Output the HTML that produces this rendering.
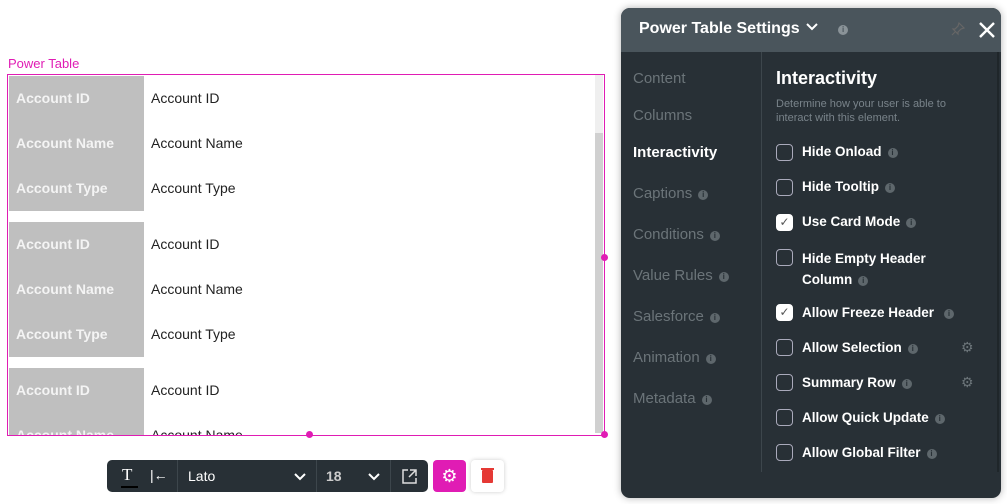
<!DOCTYPE html>
<html><head><style>
*{box-sizing:border-box;margin:0;padding:0}
body{width:1007px;height:504px;background:#fff;font-family:"Liberation Sans",sans-serif;position:relative;overflow:hidden}
.abs{position:absolute}
.lbl{left:8px;top:56px;color:#e01cb4;font-size:13px}
.box{left:7px;top:74px;width:598px;height:362px;border:1px solid #e01cb4;overflow:hidden}
.card{position:absolute;left:1px;width:586px}
.row{height:45px;display:flex;align-items:center;font-size:14px}
.row .h{width:135px;height:45px;background:#bfbfbf;color:#f4f4f4;padding-left:7px;display:flex;align-items:center;font-weight:bold;padding-bottom:2px}
.row .v{padding-left:7px;color:#222;padding-bottom:2px}
.sbt{left:595px;top:75px;width:8px;height:58px;background:#efefef}
.sbh{left:595px;top:133px;width:8px;height:300px;background:#d0d0d0}
.dot{width:7px;height:7px;border-radius:50%;background:#e01cb4}
.panel{left:621px;top:8px;width:380px;height:490px;background:#283036;border-radius:9px;overflow:hidden;box-shadow:0 0 8px rgba(0,0,0,.3)}
.ph{height:44px;background:#4a555c;color:#fff;font-weight:bold;font-size:16px;padding:12px 18px}
.nav{position:absolute;left:12px;font-size:15px;color:#6b7479}
.i{display:inline-block;width:10px;height:10px;border-radius:50%;background:#5e676c;color:#283036;font-size:8px;text-align:center;line-height:10px;font-weight:bold;vertical-align:1px;margin-left:6px}
.opt{position:absolute;left:155px;font-size:13.5px;color:#fff;font-weight:bold}
.cb{position:absolute;left:155px;width:17px;height:17px;border:1.5px solid #aab;border-radius:4px}
.cb.on{background:#fff;border-color:#fff}
.tb{left:107px;top:460px;width:321px;height:32px;background:#283036;border-radius:5px;color:#fff;font-size:14px}
</style></head><body>
<div class="abs lbl">Power Table</div>
<div class="abs box">
 <div class="card" style="top:1px">
  <div class="row"><div class="h">Account ID</div><div class="v">Account ID</div></div>
  <div class="row"><div class="h">Account Name</div><div class="v">Account Name</div></div>
  <div class="row"><div class="h">Account Type</div><div class="v">Account Type</div></div>
 </div>
 <div class="card" style="top:147px">
  <div class="row"><div class="h">Account ID</div><div class="v">Account ID</div></div>
  <div class="row"><div class="h">Account Name</div><div class="v">Account Name</div></div>
  <div class="row"><div class="h">Account Type</div><div class="v">Account Type</div></div>
 </div>
 <div class="card" style="top:293px">
  <div class="row"><div class="h">Account ID</div><div class="v">Account ID</div></div>
  <div class="row"><div class="h">Account Name</div><div class="v">Account Name</div></div>
 </div>
</div>
<div class="abs sbt"></div><div class="abs sbh"></div>
<div class="abs dot" style="left:601px;top:254px"></div>
<div class="abs dot" style="left:601px;top:431px"></div>
<div class="abs dot" style="left:306px;top:431px"></div>

<div class="abs panel">
 <div class="ph">Power Table Settings <svg width="12" height="8" style="margin-left:2px;vertical-align:2px"><path d="M1 1l5 5 5-5" stroke="#fff" stroke-width="2" fill="none"/></svg><span class="i" style="margin-left:20px;background:#8a9398;color:#4a555c">i</span>
  <svg style="position:absolute;right:5px;top:13px" width="18" height="18"><path d="M2 2l14 14M16 2L2 16" stroke="#fff" stroke-width="2.4"/></svg>
  <svg style="position:absolute;right:36px;top:14px" width="14" height="14"><path d="M8 1l5 5-3 1-3 3 0 2-5-5 2 0 3-3z M4 10l-3 3" stroke="#666" stroke-width="1.2" fill="none"/></svg></div>
 <div class="abs" style="left:140px;top:44px;width:1px;height:420px;background:#3d464c"></div>
 <div class="abs" style="left:376px;top:44px;width:2px;height:420px;background:#1f262a"></div>
 <div class="nav" style="top:62px">Content</div>
 <div class="nav" style="top:99px">Columns</div>
 <div class="nav" style="top:136px;color:#fff;font-weight:bold">Interactivity</div>
 <div class="nav" style="top:177px">Captions<span class="i">i</span></div>
 <div class="nav" style="top:218px">Conditions<span class="i">i</span></div>
 <div class="nav" style="top:259px">Value Rules<span class="i">i</span></div>
 <div class="nav" style="top:300px">Salesforce<span class="i">i</span></div>
 <div class="nav" style="top:341px">Animation<span class="i">i</span></div>
 <div class="nav" style="top:382px">Metadata<span class="i">i</span></div>
 <div class="abs" style="left:155px;top:60px;color:#fff;font-weight:bold;font-size:18px">Interactivity</div>
 <div class="abs" style="left:155px;top:89px;color:#79838a;font-size:11px;line-height:14px">Determine how your user is able to<br>interact with this element.</div>
 <div class="cb" style="top:136px"></div><div class="opt" style="left:181px;top:136px">Hide Onload<span class="i">i</span></div>
 <div class="cb" style="top:171px"></div><div class="opt" style="left:181px;top:171px">Hide Tooltip<span class="i">i</span></div>
 <div class="cb on" style="top:206px;color:#555;font-size:12px;text-align:center;line-height:15px">✓</div><div class="opt" style="left:181px;top:206px">Use Card Mode<span class="i">i</span></div>
 <div class="cb" style="top:241px"></div><div class="opt" style="left:181px;top:240px;line-height:21px">Hide Empty Header<br>Column<span class="i">i</span></div>
 <div class="cb on" style="top:296px;color:#555;font-size:12px;text-align:center;line-height:15px">✓</div><div class="opt" style="left:181px;top:297px">Allow Freeze Header<span class="i" style="margin-left:10px">i</span></div>
 <div class="cb" style="top:331px"></div><div class="opt" style="left:181px;top:332px">Allow Selection<span class="i">i</span></div>
 <div class="abs" style="left:340px;top:331px;color:#6b7479;font-size:14px">⚙</div>
 <div class="cb" style="top:366px"></div><div class="opt" style="left:181px;top:367px">Summary Row<span class="i">i</span></div>
 <div class="abs" style="left:340px;top:366px;color:#6b7479;font-size:14px">⚙</div>
 <div class="cb" style="top:401px"></div><div class="opt" style="left:181px;top:402px">Allow Quick Update<span class="i">i</span></div>
 <div class="cb" style="top:436px"></div><div class="opt" style="left:181px;top:437px">Allow Global Filter<span class="i">i</span></div>
</div>

<div class="abs tb">
 <div class="abs" style="left:15px;top:5px;font-family:'Liberation Serif',serif;font-size:17px">T</div>
 <div class="abs" style="left:14px;top:26px;width:17px;height:2px;background:#000"></div>
 <div class="abs" style="left:43px;top:7px">|←</div>
 <div class="abs" style="left:70px;top:0;width:1px;height:32px;background:#3d464c"></div>
 <div class="abs" style="left:81px;top:8px">Lato</div>
 <svg class="abs" style="left:187px;top:13px" width="12" height="8"><path d="M1 1l5 5 5-5" stroke="#fff" stroke-width="2" fill="none"/></svg>
 <div class="abs" style="left:209px;top:0;width:1px;height:32px;background:#3d464c"></div>
 <div class="abs" style="left:219px;top:8px;font-weight:bold;color:#ccc">18</div>
 <svg class="abs" style="left:261px;top:13px" width="12" height="8"><path d="M1 1l5 5 5-5" stroke="#fff" stroke-width="2" fill="none"/></svg>
 <div class="abs" style="left:283px;top:0;width:1px;height:32px;background:#3d464c"></div>
 <svg class="abs" style="left:295px;top:9px" width="15" height="15"><path d="M6 1H1v13h13V9 M8 1h6v6 M14 1L7 8" stroke="#ddd" stroke-width="1.5" fill="none"/></svg>
</div>
<div class="abs" style="left:433px;top:460px;width:33px;height:32px;background:#e01cb4;border-radius:4px;color:#fff;font-size:18px;text-align:center;line-height:32px">⚙</div>
<div class="abs" style="left:471px;top:460px;width:33px;height:32px;background:#fff;border-radius:4px;box-shadow:0 0 4px rgba(0,0,0,.2)"><div style="position:absolute;left:11px;top:10px;width:11px;height:13px;background:#e53935;border-radius:1px"></div><div style="position:absolute;left:10px;top:8px;width:13px;height:1.5px;background:#e53935"></div></div>
</body></html>
